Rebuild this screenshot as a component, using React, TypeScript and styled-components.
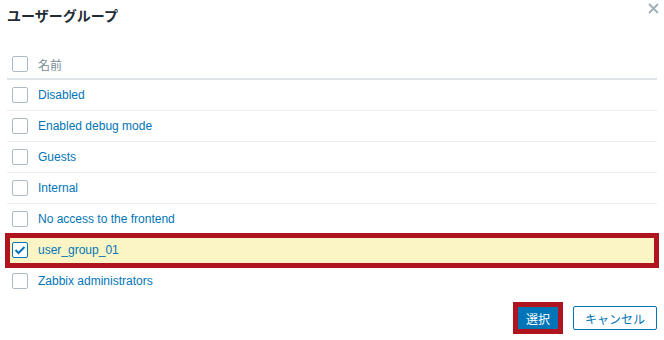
import styled, { createGlobalStyle } from "styled-components";

const GlobalStyle = createGlobalStyle`
  body {
    margin: 0;
    background: #ffffff;
    font-family: "Liberation Sans", Arial, "Noto Sans CJK JP", sans-serif;
    font-size: 12px;
    color: #1f2c33;
  }
`;

const Dialog = styled.div`
  width: 664px;
  height: 340px;
  padding: 0 7px;
  box-sizing: border-box;
  display: flex;
  flex-direction: column;
`;

const Header = styled.div`
  display: flex;
  align-items: flex-start;
  justify-content: space-between;
  height: 50px;
`;

const Title = styled.h4`
  margin: 0;
  padding-top: 7px;
  font-size: 14px;
  line-height: 18px;
  font-weight: bold;
  color: #1f2c33;
  font-family: "Liberation Sans", "Noto Sans CJK JP", sans-serif;
`;

const CloseButton = styled.button`
  border: none;
  background: none;
  padding: 0;
  margin: 1px -3px 0 0;
  width: 14px;
  height: 14px;
  cursor: pointer;
  display: flex;
  align-items: center;
  justify-content: center;
`;

const List = styled.div`
  display: flex;
  flex-direction: column;
`;

const HeadRow = styled.div`
  display: flex;
  align-items: center;
  gap: 10px;
  height: 28px;
  padding: 0 5px;
  border-bottom: 2px solid #dfe4e7;
  color: #768d99;
`;

const Row = styled.div<{ $selected?: boolean }>`
  display: flex;
  align-items: center;
  gap: 10px;
  height: 30px;
  padding: 0 5px;
  border-bottom: 1px solid ${({ $selected }) => ($selected ? "transparent" : "#ebeef0")};
  background: ${({ $selected }) => ($selected ? "#fbf5c5" : "transparent")};
  outline: ${({ $selected }) => ($selected ? "5px solid #b0141e" : "none")};
  outline-offset: -3px;
  position: relative;
  &:last-child {
    border-bottom: none;
  }
`;

const Box = styled.span<{ $checked?: boolean }>`
  width: 14px;
  height: 14px;
  border: 1px solid ${({ $checked }) => ($checked ? "#0275b8" : "#acbbc2")};
  border-radius: 2px;
  background: #ffffff;
  display: flex;
  align-items: center;
  justify-content: center;
  flex-shrink: 0;
`;

const Name = styled.a`
  color: #0275b8;
  text-decoration: none;
  font-size: 12px;
  cursor: pointer;
`;

const Footer = styled.div`
  display: flex;
  justify-content: flex-end;
  align-items: center;
  gap: 14px;
  padding-top: 10px;
`;

const Button = styled.button<{ $primary?: boolean; $marked?: boolean }>`
  height: 24px;
  padding: 0 ${({ $primary }) => ($primary ? "8px" : "11px")};
  font-family: "Liberation Sans", "Noto Sans CJK JP", sans-serif;
  font-size: 12px;
  border-radius: ${({ $marked }) => ($marked ? "0" : "2px")};
  border: 1px solid #0275b8;
  background: ${({ $primary }) => ($primary ? "#0275b8" : "#ffffff")};
  color: ${({ $primary }) => ($primary ? "#ffffff" : "#0275b8")};
  outline: ${({ $marked }) => ($marked ? "5px solid #b0141e" : "none")};
  outline-offset: -1px;
  cursor: pointer;
`;

const groups = [
  "Disabled",
  "Enabled debug mode",
  "Guests",
  "Internal",
  "No access to the frontend",
  "user_group_01",
  "Zabbix administrators",
];

const Check = () => (
  <svg width="12" height="10" viewBox="0 0 12 10">
    <polyline
      points="1.5,5 4.5,8 10.5,2"
      fill="none"
      stroke="#0275b8"
      strokeWidth="2"
    />
  </svg>
);

export default function App() {
  return (
    <>
      <GlobalStyle />
      <Dialog>
        <Header>
          <Title>ユーザーグループ</Title>
          <CloseButton aria-label="閉じる">
            <svg width="11" height="11" viewBox="0 0 11 11">
              <path d="M1 1 L10 10 M10 1 L1 10" stroke="#9eb0b9" strokeWidth="1.8" />
            </svg>
          </CloseButton>
        </Header>
        <List>
          <HeadRow>
            <Box />
            <span>名前</span>
          </HeadRow>
          {groups.map((g) => {
            const selected = g === "user_group_01";
            return (
              <Row key={g} $selected={selected}>
                <Box $checked={selected}>{selected && <Check />}</Box>
                <Name>{g}</Name>
              </Row>
            );
          })}
        </List>
        <Footer>
          <Button $primary $marked>
            選択
          </Button>
          <Button>キャンセル</Button>
        </Footer>
      </Dialog>
    </>
  );
}
